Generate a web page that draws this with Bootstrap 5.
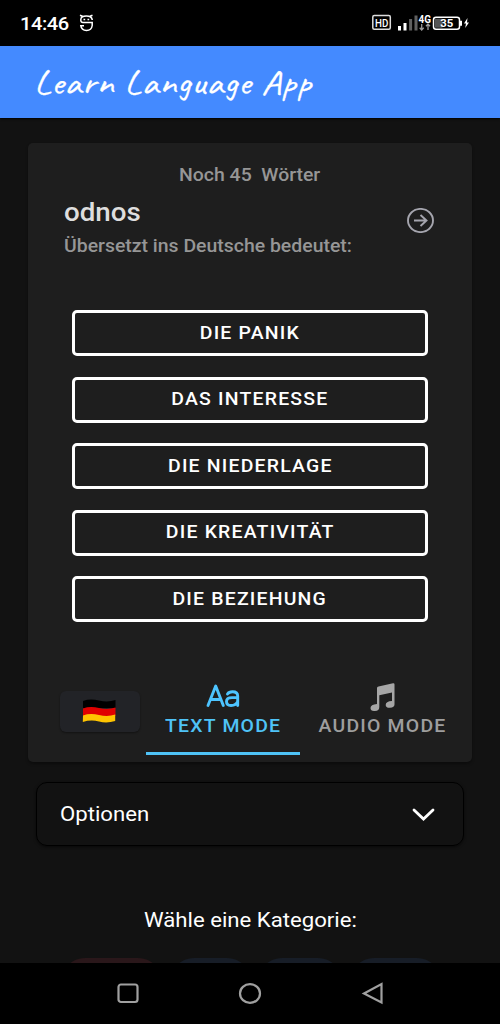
<!DOCTYPE html>
<html lang="de">
<head>
<meta charset="utf-8">
<meta name="viewport" content="width=device-width, initial-scale=1">
<title>Learn Language App</title>
<link rel="stylesheet" href="https://cdn.jsdelivr.net/npm/bootstrap@5.3.0/dist/css/bootstrap.min.css">
<style>
body{background:#121212;color:#fff;font-family:Roboto,"Liberation Sans",sans-serif;width:500px;height:1024px;overflow:hidden}
.wide{display:inline-block;transform:scaleX(1.0925);white-space:pre;line-height:24px}
.wide-start{transform-origin:left center}
svg{display:block;flex:none}
.status{height:46px;background:#000;padding:0 30px 0 20px}
.clock{font-size:18.4px;font-weight:500;width:59px;letter-spacing:-.4px;padding-top:2px}
.topbar{height:72px;background:#448aff;padding-left:34px;padding-top:1px;box-shadow:0 1px 2px #000}
.brand{font-family:Caveat,Lato,sans-serif;font-weight:400;font-size:35.3px;letter-spacing:.6px;line-height:36px;-webkit-text-stroke:.25px #fff}
.quiz{margin:25px 28px 0;height:619px;background:#1e1e1e;border-radius:5px;box-shadow:0 2px 3px rgba(0,0,0,.35)}
.muted{color:#969696;font-size:17.8px;font-weight:500}
.left-count{padding-top:20px;height:51px}
.word{font-size:25.4px;font-weight:500;color:#dedede;line-height:37px}
.prompt{padding:0 38px 0 36px;height:116px}
.prompt .muted{margin-top:3px}
.next{margin-top:14px}
.answers{padding:0 44px;gap:20.6px}
.answer{height:46px;border:3px solid #fff;border-radius:5px;color:#fff;padding:0 0 1px;line-height:1}
.caps{font-size:17.8px;font-weight:500;letter-spacing:1.1px}
.modes{margin-top:52px;height:82px;padding-left:32px}
.flag{width:80px;height:41px;margin:17px 6px 0 0;padding:0 2px 1px 0;background:#222327;border-radius:6px;box-shadow:0 1px 2px rgba(0,0,0,.4)}
.mode{height:81px;padding-top:9px;color:#9e9e9e}
.mode-text{width:154px;border-bottom:3px solid #4fc3f7;color:#4fc3f7}
.mode-text svg{margin-top:1px}
.mode-text .caps{margin-top:6px}
.mode-audio .caps{margin-top:3px}
.mode-audio{width:165px}
.options{margin:20px 36px 0;height:64px;border:1px solid #000;border-radius:11px;padding:0 28px 0 23px;box-shadow:0 1px 3px rgba(0,0,0,.6)}
.opt-label{font-size:20.3px}
.category{height:117px;padding-top:59px;font-size:20.3px}
.chips{height:5px;overflow:hidden;margin-top:-5px;padding-left:63px;gap:11.5px}
.pill{height:41px;border-radius:22px/20px;background:#171d27;flex:none}
.pill-red{background:#2a171a;width:97px}
.sysnav{height:61px;background:#000}
</style>
</head>
<body class="d-flex flex-column">
<div class="status d-flex align-items-center flex-shrink-0">
  <span class="wide wide-start clock">14:46</span>
  <svg width="15" height="18" viewBox="0 0 15 18" fill="none" stroke="#fff" stroke-width="1.500"><path d="M1 1.200l3 1.300M13.500 1.200l-3 1.300M13.200 6V5.500Q12.500 2 7.300 2T1.800 5.500Q1.600 8.500 4 8.500H13.200V11.500Q12.500 16.500 7.500 16.500T1.800 11.700H5"/><path d="M4.500 5.500h1.700M8.500 5.500h1.700"/></svg>
  <svg class="ms-auto" width="98" height="20" viewBox="0 0 98 20"><rect x=".8" y="2.500" width="17.500" height="13.800" rx="1.500" fill="none" stroke="#ddd" stroke-width="1.500"/><text x="3" y="13.500" font-family="Roboto" font-size="11.500" font-weight="500" fill="#fff" textLength="13.300" lengthAdjust="spacingAndGlyphs">HD</text><path d="M27.500 13v4.500M33 10v7.500" stroke="#fff" stroke-width="3"/><path d="M38.600 6v11.500M44 2.500v15" stroke="#606060" stroke-width="3"/><text x="46.500" y="9.500" font-family="Roboto" font-size="10.500" font-weight="700" fill="#fff" textLength="12.500" lengthAdjust="spacingAndGlyphs">4G</text><path d="M49.700 11v6m-2-2.200l2 2.200 2-2.200M56 17v-6m-2 2.200l2-2.200 2 2.200" fill="none" stroke="#999" stroke-width="1.300"/><rect x="61.500" y="4.200" width="26" height="12" rx="2.500" fill="none" stroke="#fff" stroke-width="1.500"/><rect x="63" y="5.700" width="7.500" height="9" fill="#555"/><path d="M89 7.700v5" stroke="#fff" stroke-width="2"/><text x="68.300" y="14" font-family="Roboto" font-size="10.500" font-weight="700" fill="#fff" textLength="13" lengthAdjust="spacingAndGlyphs">35</text><path d="M95.500 5l-3.500 5.500h2l-.8 4.500 3.800-5.500h-2z" fill="#fff"/></svg>
</div>
<header class="topbar d-flex align-items-center flex-shrink-0"><span class="wide wide-start brand">Learn Language App</span></header>
<main class="quiz flex-shrink-0">
  <div class="left-count text-center"><span class="wide muted">Noch 45  Wörter</span></div>
  <div class="prompt d-flex justify-content-between">
    <div class="d-flex flex-column align-items-start"><span class="wide wide-start word">odnos</span><span class="wide wide-start muted">Übersetzt ins Deutsche bedeutet:</span></div>
    <svg class="next" width="27" height="25" viewBox="0 0 27 25" fill="none" stroke="#a5a5ae" stroke-width="1.900"><ellipse cx="13.500" cy="12.500" rx="12.500" ry="11.600"/><path d="M7 12.500h12.500M13.500 7l6 5.500-6 5.500"/></svg>
  </div>
  <div class="answers d-flex flex-column">
    <button class="btn answer"><span class="wide caps">DIE PANIK</span></button>
    <button class="btn answer"><span class="wide caps">DAS INTERESSE</span></button>
    <button class="btn answer"><span class="wide caps">DIE NIEDERLAGE</span></button>
    <button class="btn answer"><span class="wide caps">DIE KREATIVITÄT</span></button>
    <button class="btn answer"><span class="wide caps">DIE BEZIEHUNG</span></button>
  </div>
  <div class="modes d-flex">
    <div class="flag d-flex align-items-center justify-content-center">
      <svg width="34" height="24" viewBox="0 0 34 24"><path d="M1 2Q8-.5 17 1.500T33.500 1V9H1z" fill="#000"/><path d="M1 9.500Q8 7 17 9T33.500 8.500V17H1z" fill="#e00000"/><path d="M1 16.500Q8 14 17 16T33.200 15.500V22Q25 24.500 17 22.500T.8 23z" fill="#ffc400"/></svg>
    </div>
    <div class="mode mode-text d-flex flex-column align-items-center">
      <svg width="34" height="24" viewBox="0 0 34 24" fill="none" stroke="#4dc4ff" stroke-width="2.900" stroke-linecap="round" stroke-linejoin="round"><path d="M2 21.500L9.700 2 17.300 21.500M4.500 15.500H15M21.500 10Q23 7.800 26.500 7.800 31.700 7.800 31.700 12V21.500M31.700 13.600H26Q20.500 13.600 20.500 17.500 20.500 21.500 25 21.500 30 21.500 31.700 17.500"/></svg>
      <span class="wide caps">TEXT MODE</span>
    </div>
    <div class="mode mode-audio d-flex flex-column align-items-center">
      <svg width="25" height="28" viewBox="0 0 25 28" fill="#a6a6a6"><path d="M7 5Q7 3.700 8.500 3.400L23 .3Q24.500 0 24.500 1.500V21.500Q24.500 24.500 20 24.800 15.700 25 15.700 22 15.700 18.300 22 18V9.500L9.300 12.200V24Q9.300 27.800 5 28 .5 28.200.5 25 .5 21.500 7 21z"/></svg>
      <span class="wide caps">AUDIO MODE</span>
    </div>
  </div>
</main>
<div class="options d-flex align-items-center justify-content-between flex-shrink-0">
  <span class="wide wide-start opt-label">Optionen</span>
  <svg width="23" height="13" viewBox="0 0 23 13" fill="none" stroke="#fff" stroke-width="2.800" stroke-linecap="round"><path d="M2 2l9.500 9L21 2"/></svg>
</div>
<div class="category text-center flex-shrink-0"><span class="wide">Wähle eine Kategorie:</span></div>
<div class="chips d-flex flex-shrink-0">
  <span class="pill pill-red"></span><span class="pill" style="width:77px"></span><span class="pill" style="width:80px"></span><span class="pill" style="width:87px"></span>
</div>
<footer class="sysnav flex-shrink-0 d-flex justify-content-center align-items-center">
  <svg width="268" height="24" viewBox="0 0 268 24" fill="none" stroke="#a0a0a0" stroke-width="2.200"><rect x="2.500" y="2.500" width="19" height="17.500" rx="2.500"/><ellipse cx="134" cy="11.500" rx="10" ry="9.300"/><path d="M265.500 2v18.500L248 11.500z"/></svg>
</footer>
<script src="https://cdn.jsdelivr.net/npm/bootstrap@5.3.0/dist/js/bootstrap.bundle.min.js"></script>
</body>
</html>
